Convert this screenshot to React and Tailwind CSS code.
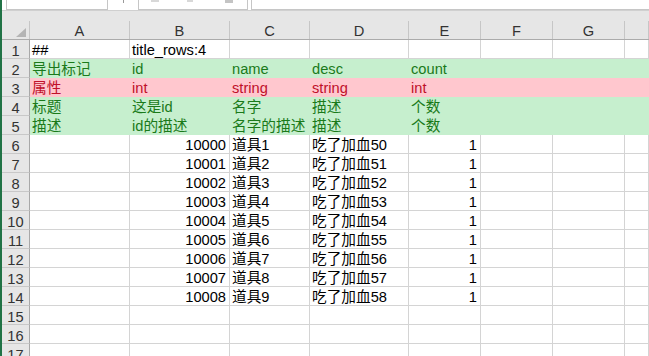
import React from 'react';

const COLS = [
  { name: 'A', w: 'w-[100px]' },
  { name: 'B', w: 'w-[100px]' },
  { name: 'C', w: 'w-[80px]' },
  { name: 'D', w: 'w-[99px]' },
  { name: 'E', w: 'w-[72px]' },
  { name: 'F', w: 'w-[72px]' },
  { name: 'G', w: 'w-[72px]' },
  { name: '', w: 'flex-1' },
];

const FILLS = {
  green: 'bg-[#c6efce] text-[#1a7a1a]',
  red: 'bg-[#ffc7ce] text-[#c0102a]',
};

const c = (t, right) => ({ t, right });

const ROWS = [
  { cells: [c('##'), c('title_rows:4')] },
  { fill: 'green', cells: [c('导出标记'), c('id'), c('name'), c('desc'), c('count')] },
  { fill: 'red', cells: [c('属性'), c('int'), c('string'), c('string'), c('int')] },
  { fill: 'green', cells: [c('标题'), c('这是id'), c('名字'), c('描述'), c('个数')] },
  { fill: 'green', cells: [c('描述'), c('id的描述'), c('名字的描述'), c('描述'), c('个数')] },
  ...Array.from({ length: 9 }, (_, i) => ({
    cells: [c(''), c(String(10000 + i), true), c('道具' + (i + 1)), c('吃了加血' + (50 + i)), c('1', true)],
  })),
  { cells: [] },
  { cells: [] },
  { cells: [] },
];

function RowHeader({ n }) {
  return (
    <div className="w-[28px] shrink-0 h-full bg-[#e6e6e6] border-r border-b border-[#c8c8c8] border-r-[#a8a8a8] text-center pt-[2px] leading-[18px] text-[#333]">
      {n}
    </div>
  );
}

export default function App() {
  return (
    <div
      className="w-[649px] h-[356px] overflow-hidden bg-white border-l-2 border-[#217346] text-[14.67px] text-black"
      style={{ fontFamily: '"Liberation Sans", "Noto Sans CJK SC", sans-serif' }}
    >
      {/* formula bar, cut off at the top */}
      <div className="h-[11px] flex border-b border-[#d0d0d0] bg-white">
        <div className="ml-[4px] w-[102px] h-[10px] border-x border-b border-[#c6c6c6] overflow-hidden flex items-end pl-[12px]">
          <span className="leading-[14px] text-[13px] text-[#444] translate-y-[-6px]">120</span>
        </div>
        <div className="w-[30px] flex justify-center">
          <div className="w-[1px] h-[3px] bg-[#999]" />
        </div>
        <div className="w-[110px] h-[10px] border-x border-b border-[#c6c6c6] flex items-start">
          <div className="ml-[12px] w-[8px] h-[2px] bg-[#d8d8d8]" />
          <div className="ml-[28px] w-[6px] h-[2px] bg-[#d8d8d8]" />
          <div className="ml-[32px] w-[8px] h-[3px] bg-[#c4c4c4]" />
        </div>
        <div className="ml-[3px] flex-1 h-[10px] border-l border-b border-[#c6c6c6]" />
      </div>
      <div className="h-[10px] bg-[#e6e6e6]" />

      {/* column headers */}
      <div className="h-[19px] flex bg-[#e6e6e6] border-b border-[#ababab] text-[#333]">
        <div className="w-[28px] shrink-0 h-full border-r border-[#c6c6c6] flex items-end justify-end pr-[3px] pb-[2px]">
          <svg width="10" height="9" viewBox="0 0 10 9">
            <polygon points="10,0 10,9 0,9" fill="#b4b4b4" />
          </svg>
        </div>
        {COLS.map((col, i) => (
          <div key={i} className={`${col.w} shrink-0 h-full border-r border-[#c6c6c6] text-center pt-[1px] leading-[18px]`}>
            {col.name}
          </div>
        ))}
      </div>

      {/* rows */}
      {ROWS.map((row, r) => (
        <div key={r} className={`h-[19px] flex ${row.fill ? FILLS[row.fill] : ''}`}>
          <RowHeader n={r + 1} />
          {COLS.map((col, i) => {
            const cell = row.cells[i];
            return (
              <div
                key={i}
                className={`${col.w} shrink-0 h-full whitespace-nowrap px-[2px] pt-[1px] leading-[18px] ${
                  row.fill ? '' : 'border-r border-b border-[#d4d4d4]'
                } ${cell && cell.right ? 'text-right pr-[3px]' : ''}`}
              >
                {cell ? cell.t : ''}
              </div>
            );
          })}
        </div>
      ))}
    </div>
  );
}
